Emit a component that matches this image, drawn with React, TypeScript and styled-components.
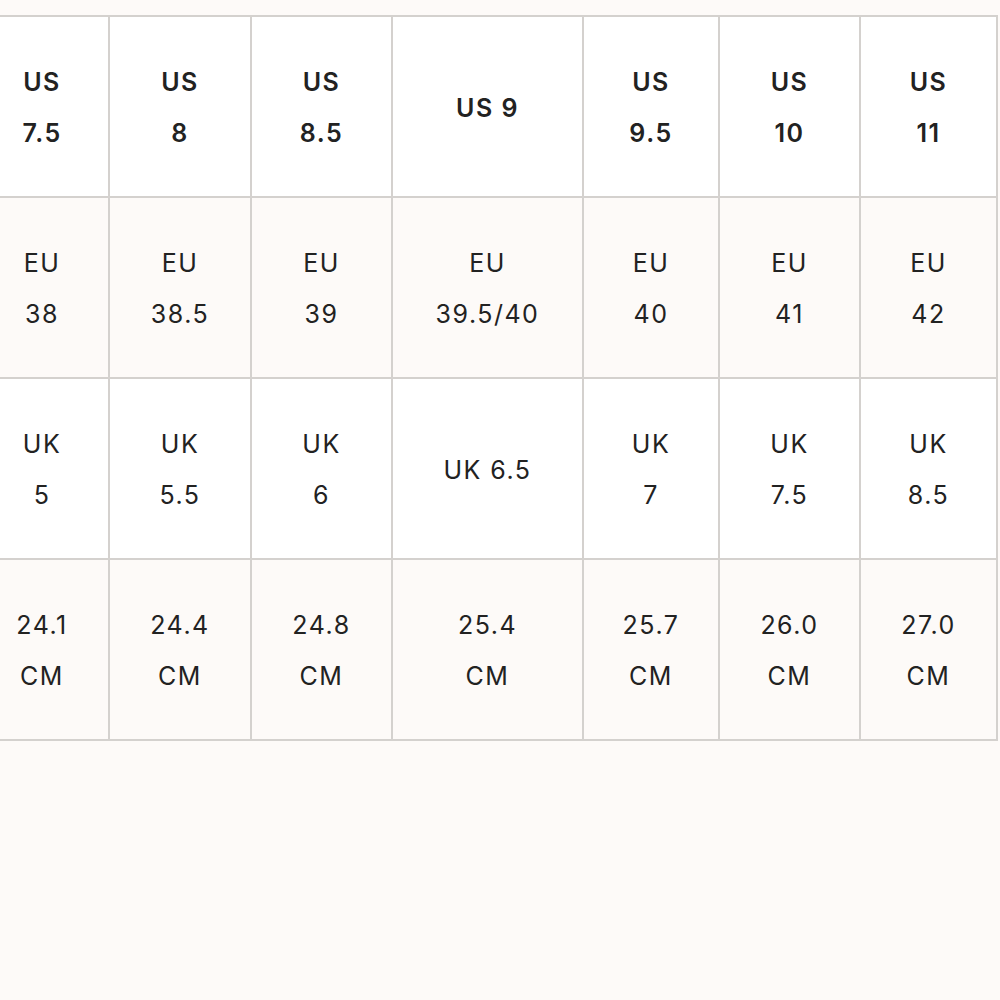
import React from "react";
import styled, { createGlobalStyle } from "styled-components";

const Global = createGlobalStyle`
  html, body {
    margin: 0;
    padding: 0;
    background: #fdfaf8;
    font-family: Inter, "Noto Sans", "Liberation Sans", sans-serif;
  }
`;

const Page = styled.div`
  width: 1000px;
  height: 1000px;
  overflow: hidden;
  padding-top: 15px;
  box-sizing: border-box;
`;

const Grid = styled.div`
  display: grid;
  grid-template-columns: 132px 140px 139px 189px 134px 139px 135px;
  grid-auto-rows: 179px;
  gap: 2px;
  padding: 2px;
  margin-left: -26px;
  width: max-content;
  background: #d4d1ce;
`;

const Cell = styled.div<{ $tint: boolean; $head: boolean }>`
  display: flex;
  flex-direction: column;
  align-items: center;
  justify-content: center;
  text-align: center;
  padding-top: 3px;
  box-sizing: border-box;
  background: ${(p) => (p.$tint ? "#fdfaf8" : "#ffffff")};
  color: #222222;
  font-size: 25px;
  line-height: 51px;
  letter-spacing: 0.06em;
  font-weight: ${(p) => (p.$head ? 600 : 400)};
`;

const rows: string[][][] = [
  [["US", "7.5"], ["US", "8"], ["US", "8.5"], ["US 9"], ["US", "9.5"], ["US", "10"], ["US", "11"]],
  [["EU", "38"], ["EU", "38.5"], ["EU", "39"], ["EU", "39.5/40"], ["EU", "40"], ["EU", "41"], ["EU", "42"]],
  [["UK", "5"], ["UK", "5.5"], ["UK", "6"], ["UK 6.5"], ["UK", "7"], ["UK", "7.5"], ["UK", "8.5"]],
  [["24.1", "CM"], ["24.4", "CM"], ["24.8", "CM"], ["25.4", "CM"], ["25.7", "CM"], ["26.0", "CM"], ["27.0", "CM"]],
];

export default function App() {
  return (
    <Page>
      <Global />
      <Grid>
        {rows.map((row, r) =>
          row.map((lines, c) => (
            <Cell key={`${r}-${c}`} $tint={r % 2 === 1} $head={r === 0}>
              {lines.map((l, i) => (
                <span key={i}>{l}</span>
              ))}
            </Cell>
          ))
        )}
      </Grid>
    </Page>
  );
}
